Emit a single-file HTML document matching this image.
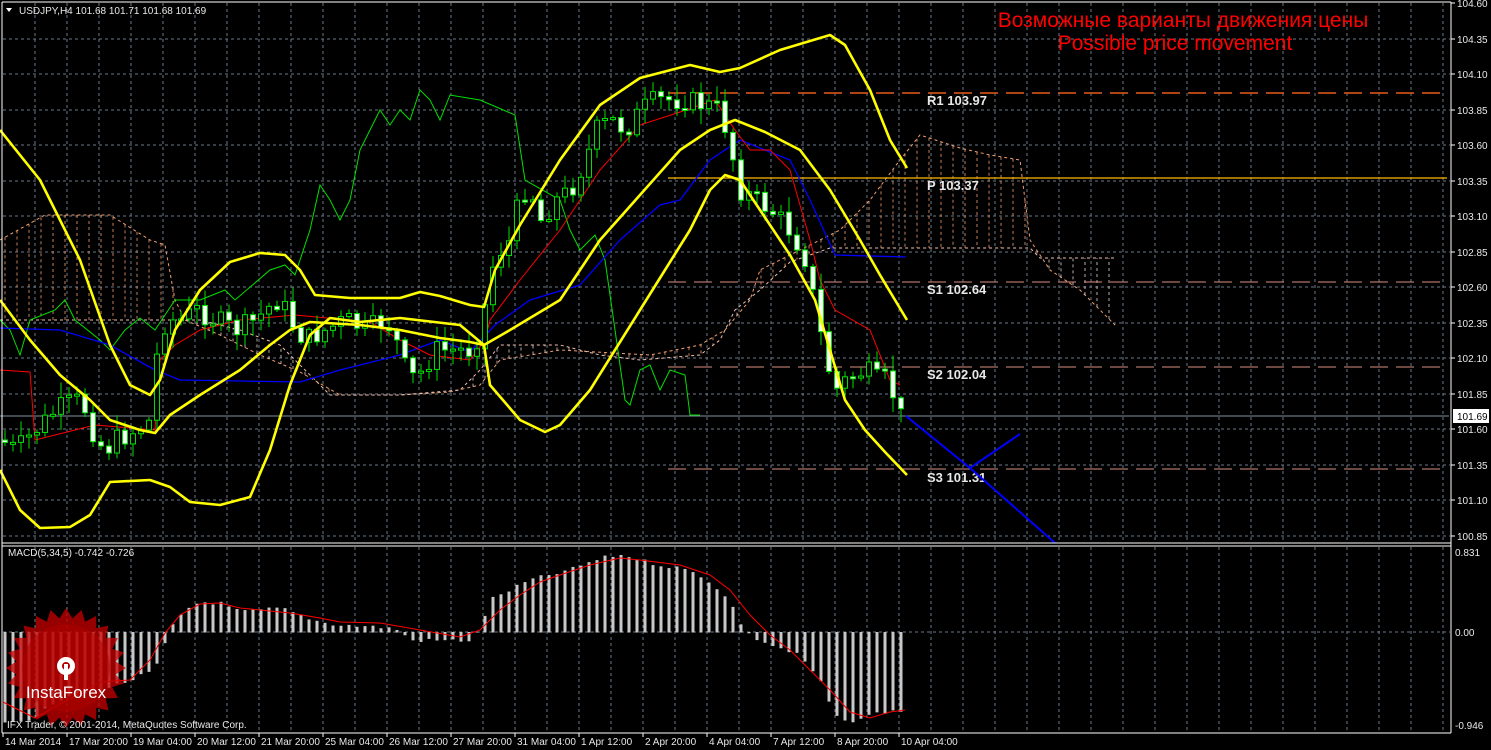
<!DOCTYPE html>
<html><head><meta charset="utf-8">
<style>
html,body{margin:0;padding:0;background:#000;width:1491px;height:750px;overflow:hidden}
svg{display:block}
text{font-family:"Liberation Sans",sans-serif}
</style></head>
<body>
<svg id="c" width="1491" height="750" xmlns="http://www.w3.org/2000/svg">
<rect width="1491" height="750" fill="#000"/>
<g id="grid"></g>
<g id="cloud"></g>
<g id="piv">
 <line x1="668" y1="93" x2="1447" y2="93" stroke="#e85a1a" stroke-width="1.5" stroke-dasharray="18,8"/>
 <line x1="668" y1="178" x2="1447" y2="178" stroke="#ffb800" stroke-width="1.3"/>
 <line x1="668" y1="282" x2="1447" y2="282" stroke="#d89080" stroke-dasharray="18,8"/>
 <line x1="668" y1="367" x2="1447" y2="367" stroke="#d89080" stroke-dasharray="18,8"/>
 <line x1="668" y1="469" x2="1447" y2="469" stroke="#d89080" stroke-dasharray="18,8"/>
 <line x1="0" y1="416" x2="1449" y2="416" stroke="#8090a0" stroke-width="1"/>
</g>
<g id="lines"></g>
<g id="candles"></g>
<g id="ylines"></g>
<g font-family="Liberation Mono,monospace" font-weight="bold" font-size="13" fill="#e8e8e8">
 <text x="927" y="105">R1 103.97</text>
 <text x="927" y="190">P 103.37</text>
 <text x="927" y="294">S1 102.64</text>
 <text x="927" y="379">S2 102.04</text>
 <text x="927" y="482">S3 101.31</text>
</g>
<polyline points="906,416 970,468 1020,434" fill="none" stroke="#0000ff" stroke-width="2"/>
<line x1="970" y1="468" x2="1055" y2="543" stroke="#0000ff" stroke-width="2"/>
<text x="1183" y="27" text-anchor="middle" font-size="21" fill="#ff0000">Возможные варианты движения цены</text>
<text x="1175" y="50" text-anchor="middle" font-size="21" fill="#ff0000">Possible price movement</text>
<g id="macd"></g>
<g transform="translate(66,668)">
 <polygon id="star" fill="#c80000" opacity="0.75"/>
 <circle r="44" fill="#b00000" opacity="0.5"/>
 <circle cx="0" cy="-2" r="9" fill="#fff"/>
 <circle cx="0" cy="-2" r="4" fill="#b00000"/>
 <rect x="-2" y="-4" width="4" height="16" fill="#fff"/>
 <text x="0" y="30" text-anchor="middle" font-size="17" fill="#fff">InstaForex</text>
</g>
<line x1="2" y1="2" x2="1451" y2="2" stroke="#fff"/>
<line x1="2" y1="2" x2="2" y2="733" stroke="#fff"/>
<line x1="1451" y1="2" x2="1451" y2="733" stroke="#fff"/>
<line x1="2" y1="543" x2="1451" y2="543" stroke="#fff"/>
<line x1="2" y1="546" x2="1451" y2="546" stroke="#fff"/>
<line x1="2" y1="733" x2="1451" y2="733" stroke="#fff"/>
<g id="axis" font-size="10" fill="#e8e8e8"></g>
<text x="8" y="556" font-size="10" fill="#e8e8e8">MACD(5,34,5) -0.742 -0.726</text>
<text x="7" y="728" font-size="10" fill="#e8e8e8">IFX Trader, © 2001-2014, MetaQuotes Software Corp.</text>
<text x="19" y="14" font-size="10" fill="#e8e8e8">USDJPY,H4  101.68 101.71 101.68 101.69</text>
<polygon points="6,8 12,8 9,12" fill="#fff"/>
<rect x="1453" y="409" width="36" height="14" fill="#fff"/>
<text x="1457" y="420" font-size="10" fill="#000">101.69</text>
</svg>
<script>
(function(){
var NS="http://www.w3.org/2000/svg";
function el(p,t,a){var e=document.createElementNS(NS,t);for(var k in a)e.setAttribute(k,a[k]);document.getElementById(p).appendChild(e);return e;}
function pts(a){return a.map(function(p){return p[0]+","+p[1]}).join(" ");}
function interp(a,x){if(x<=a[0][0])return a[0][1];for(var i=1;i<a.length;i++){if(x<=a[i][0]){var t=(x-a[i-1][0])/(a[i][0]-a[i-1][0]);return a[i-1][1]+t*(a[i][1]-a[i-1][1]);}}return a[a.length-1][1];}
var s=7;function rnd(){s=(s*9301+49297)%233280;return s/233280;}
for(var x=35;x<1450;x+=32){el("grid","line",{x1:x,y1:3,x2:x,y2:542,stroke:"#6a7888","stroke-dasharray":"3,3"});el("grid","line",{x1:x,y1:547,x2:x,y2:732,stroke:"#6a7888","stroke-dasharray":"3,3"});}
var labs=["104.60","104.35","104.10","103.85","103.60","103.35","103.10","102.85","102.60","102.35","102.10","101.85","101.60","101.35","101.10","100.85"];
for(var i=0;i<16;i++){var y=Math.round(3+i*35.5);if(i>0)el("grid","line",{x1:3,y1:y,x2:1450,y2:y,stroke:"#6a7888","stroke-dasharray":"3,3"});var t=el("axis","text",{x:1457,y:y+4});t.textContent=labs[i];el("axis","line",{x1:1451,y1:y,x2:1455,y2:y,stroke:"#fff"});}
el("grid","line",{x1:3,y1:632,x2:1450,y2:632,stroke:"#6a7888","stroke-dasharray":"3,3"});
[["0.831",556],["0.00",636],["-0.946",729]].forEach(function(a){var t=el("axis","text",{x:1455,y:a[1]});t.textContent=a[0];});
var tl=["14 Mar 2014","17 Mar 20:00","19 Mar 04:00","20 Mar 12:00","21 Mar 20:00","25 Mar 04:00","26 Mar 12:00","27 Mar 20:00","31 Mar 04:00","1 Apr 12:00","2 Apr 20:00","4 Apr 04:00","7 Apr 12:00","8 Apr 20:00","10 Apr 04:00"];
for(var i=0;i<tl.length;i++){var xx=3+i*64;var t=el("axis","text",{x:xx+2,y:745});t.textContent=tl[i];el("axis","line",{x1:xx,y1:733,x2:xx,y2:737,stroke:"#fff"});}
var A=[[0,240],[45,215],[110,215],[150,240],[165,245],[175,300],[185,320],[220,335],[260,355],[300,372],[340,395],[400,395],[450,392],[480,385],[500,360],[560,350],[650,355],[700,345],[725,330],[750,300],[760,270],[790,255],[840,230],[870,200],[900,160],[920,135],[960,148],[990,155],[1020,160],[1030,240],[1050,270],[1080,290],[1100,310],[1115,325]];
var B=[[0,320],[200,320],[240,330],[280,345],[330,395],[400,395],[460,390],[480,370],[500,345],[560,345],[600,355],[640,360],[700,355],[720,340],[735,310],[760,290],[790,262],[830,248],[1030,248],[1040,258],[1115,258]];
el("cloud","polyline",{points:pts(A),fill:"none",stroke:"#f0a070","stroke-dasharray":"3,3"});
el("cloud","polyline",{points:pts(B),fill:"none",stroke:"#f0c0b0","stroke-dasharray":"3,3"});
for(var x=5;x<1115;x+=12){var a=interp(A,x),b=interp(B,x);el("cloud","line",{x1:x,y1:a,x2:x,y2:b,stroke:(a<b?"#f0a070":"#e8d0d0"),"stroke-dasharray":"3,3","stroke-width":"0.8"});}
var R=[[0,370],[30,372],[35,440],[95,425],[155,430],[160,360],[175,345],[200,330],[240,320],[295,315],[370,322],[400,340],[430,355],[470,360],[485,340],[490,320],[520,280],[560,230],[600,170],[640,125],[680,112],[715,100],[735,130],[750,150],[770,150],[790,170],[810,240],[820,280],[835,310],[870,330],[890,380],[900,385]];
var Bl=[[0,328],[60,330],[110,345],[155,370],[180,380],[300,382],[340,370],[400,355],[440,340],[470,352],[495,325],[530,300],[580,285],[620,240],[660,205],[680,200],[710,160],[740,140],[790,160],[810,200],[835,255],[906,257]];
var G=[[0,320],[10,330],[20,355],[30,320],[55,310],[65,300],[75,320],[100,340],[110,350],[125,330],[140,318],[155,330],[175,300],[200,300],[225,290],[235,300],[270,270],[285,265],[295,275],[310,230],[320,185],[330,200],[340,220],[350,200],[360,150],[380,110],[390,125],[400,110],[410,120],[420,90],[430,100],[440,120],[450,95],[480,100],[515,115],[525,180],[560,200],[570,230],[580,250],[595,235],[605,260],[615,330],[625,400],[630,405],[640,370],[650,365],[660,390],[670,370],[685,375],[690,415],[700,415]];
el("lines","polyline",{points:pts(G),fill:"none",stroke:"#00e000","stroke-width":"1"});
el("lines","polyline",{points:pts(Bl),fill:"none",stroke:"#0000ff","stroke-width":"1.3"});
el("lines","polyline",{points:pts(R),fill:"none",stroke:"#ff0000","stroke-width":"1"});
var Y=[
[[0,130],[40,180],[80,260],[110,345],[130,385],[150,395],[160,380],[175,330],[200,290],[230,262],[260,253],[285,255],[300,270],[315,295],[350,298],[400,298],[420,292],[440,296],[470,305],[484,307],[495,270],[520,225],[560,160],[600,105],[640,78],[690,65],[720,72],[740,68],[780,50],[830,35],[845,45],[870,90],[890,140],[907,168]],
[[0,300],[30,340],[60,375],[90,400],[110,420],[140,430],[155,433],[170,415],[200,395],[240,370],[270,345],[290,330],[310,322],[360,325],[400,330],[440,338],[470,342],[484,345],[510,330],[560,300],[600,240],[640,195],[680,150],[710,130],[735,120],[765,132],[800,150],[830,190],[860,240],[880,275],[907,320]],
[[0,470],[20,510],[40,528],[70,527],[90,515],[110,482],[150,480],[170,487],[190,502],[220,505],[250,497],[270,450],[290,385],[310,335],[330,318],[360,322],[400,318],[460,325],[484,345],[490,385],[520,420],[545,432],[560,425],[590,390],[615,350],[640,310],[665,270],[690,230],[710,190],[725,175],[740,180],[760,210],[790,255],[815,300],[830,350],[845,400],[865,430],[885,452],[907,475]]
];
Y.forEach(function(l){el("ylines","polyline",{points:pts(l),fill:"none",stroke:"#ffff00","stroke-width":"2.6","stroke-linejoin":"round"});});
var P=[[5,440],[20,450],[40,430],[60,410],[80,400],[90,410],[100,440],[110,450],[120,440],[140,430],[155,420],[160,360],[170,320],[185,320],[200,310],[220,320],[240,330],[260,320],[280,300],[290,310],[300,330],[310,340],[330,330],[350,320],[370,330],[390,320],[400,340],[410,370],[420,380],[440,350],[475,350],[485,330],[495,270],[505,250],[515,240],[525,190],[535,190],[545,220],[560,200],[575,190],[590,160],[600,130],[615,120],[630,130],[645,110],[660,100],[690,100],[710,105],[725,110],[735,150],[745,190],[760,200],[775,210],[790,225],[800,240],[810,260],[820,310],[830,360],[840,390],[850,380],[870,370],[880,380],[890,380],[900,400],[905,416]];
var prev=interp(P,5);
for(var x=5;x<=905;x+=8){var c=interp(P,x+4)+(rnd()-0.5)*22;if(x==905)c=416;var o=prev;var hi=Math.min(o,c)-rnd()*14-2,lo=Math.max(o,c)+rnd()*14+2;
el("candles","line",{x1:x,y1:hi,x2:x,y2:lo,stroke:"#00e000"});
var by=Math.min(o,c),bh=Math.max(2,Math.abs(o-c));
el("candles","rect",{x:x-2.5,y:by,width:5,height:bh,fill:(c<o?"#000":"#fff"),stroke:"#00e000","stroke-width":"1"});prev=c;}
var H=[[5,720],[30,720],[60,700],[100,690],[130,680],[155,670],[170,630],[185,610],[200,602],[220,603],[240,612],[260,610],[280,608],[300,615],[320,622],[340,625],[380,627],[400,630],[410,640],[470,640],[480,630],[490,600],[510,590],[530,580],[550,575],[570,570],[590,562],[610,556],[625,555],[640,560],[660,565],[680,568],[700,575],[720,590],[735,610],[745,632],[760,640],[780,648],[800,655],[820,680],[835,715],[845,722],[860,718],[880,712],[905,710]];
for(var x=5;x<=905;x+=8){var h=interp(H,x)+(rnd()-0.5)*4;el("macd","rect",{x:x-1.5,y:Math.min(h,632),width:3,height:Math.abs(h-632)+0.5,fill:"#c8c8c8"});}
var S=[[3,702],[35,718],[100,682],[130,680],[150,660],[165,633],[180,615],[200,604],[220,603],[240,608],[290,613],[320,618],[340,622],[380,623],[420,630],[460,637],[480,630],[500,610],[520,595],[540,582],[560,575],[590,565],[620,558],[640,560],[680,565],[710,575],[730,590],[750,615],[770,635],[790,650],[810,670],[830,690],[850,712],[870,718],[890,712],[905,710]];
el("macd","polyline",{points:pts(S),fill:"none",stroke:"#ff0000","stroke-width":"1"});
var sp=[];for(var i=0;i<48;i++){var r=(i%2?50:60),a=i*Math.PI/24;sp.push([(r*Math.cos(a)).toFixed(1),(r*Math.sin(a)).toFixed(1)]);}
document.getElementById("star").setAttribute("points",pts(sp));
})();
</script>
</body></html>
